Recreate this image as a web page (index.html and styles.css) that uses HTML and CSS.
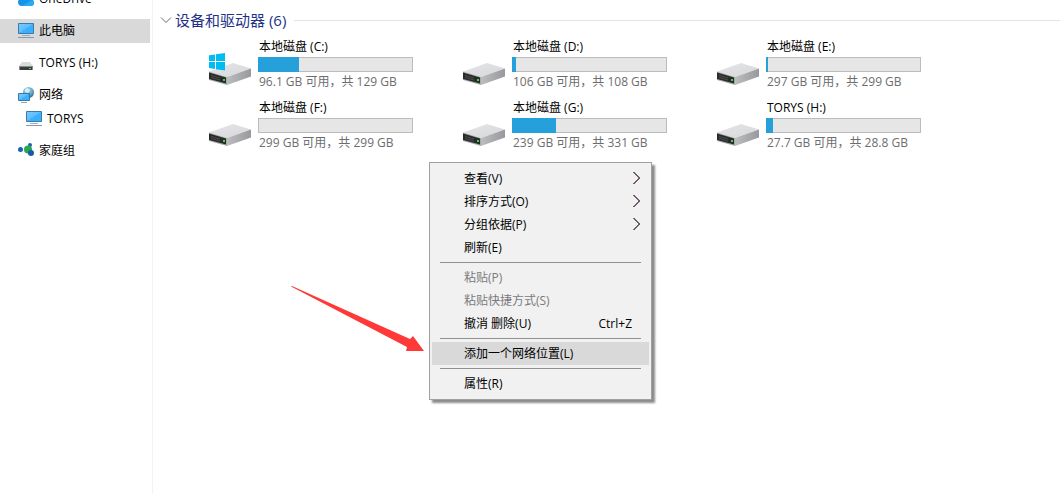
FILE: index.html
```html
<!DOCTYPE html>
<html lang="zh-CN">
<head>
<meta charset="utf-8">
<title>此电脑</title>
<link rel="stylesheet" href="styles.css">
</head>
<body>
<svg class="defs" aria-hidden="true">
  <defs>
    <linearGradient id="top" x1="0" y1="0" x2="1" y2="1"><stop offset="0" stop-color="#e6e6e8"/><stop offset="1" stop-color="#d6d7da"/></linearGradient>
    <linearGradient id="side" x1="0" y1="0" x2="1" y2="0"><stop offset="0" stop-color="#bcbdbf"/><stop offset="1" stop-color="#98999c"/></linearGradient>
    <linearGradient id="screen" x1="0" y1="0" x2="1" y2="1"><stop offset="0" stop-color="#7accff"/><stop offset=".5" stop-color="#5cbdff"/><stop offset=".5" stop-color="#3caeff"/><stop offset="1" stop-color="#36b2ff"/></linearGradient>
    <radialGradient id="globe" cx=".4" cy=".3" r=".8"><stop offset="0" stop-color="#c5e6f2"/><stop offset=".5" stop-color="#6fabc9"/><stop offset="1" stop-color="#286488"/></radialGradient>
    <symbol id="drive" viewBox="0 0 44 24">
      <path d="M1 9.500 25 1 43 6.500 19 15Z" fill="url(#top)"/>
      <path d="M19 15 43 6.500V14.500L19 23Z" fill="url(#side)"/>
      <path d="M1 9.500 19 15V23L1 18Z" fill="#a8a9ab"/>
      <path d="M1 10.500 18 15.500V21.500L1 17Z" fill="#292b2b"/>
      <path d="M3 13.500 12 16M3 15.500 12 18" stroke="#4c4f4d"/>
      <path d="M15 17h2v2h-2z" fill="#35dc35"/>
    </symbol>
    <symbol id="pc" viewBox="0 0 16 16">
      <path d="M0.500 0.500h15v10h-15z" fill="url(#screen)" stroke="#3c7ba5"/>
      <path d="M4 12.500h8" stroke="#9aaebf"/><path d="M0 14.500h16" stroke="#7e9ab7"/>
    </symbol>
    <symbol id="more" viewBox="0 0 9 14">
      <path d="M1 1 7 7 1 13" stroke="#e09a4a"/>
      <path d="M2 1 8 7 2 13" stroke="#6aa8ee"/>
      <path d="M1.500 1 7.500 7 1.500 13" stroke="#3a1c38"/>
    </symbol>
  </defs>
</svg>
<div class="window">
  <nav class="sidebar" aria-label="导航">
    <a class="node" href="#"><svg class="ico" viewBox="0 0 16 16"><path d="M4 15C1 15 0 13 0 11s2-4 4-4c1-3 8-3 9 1 2 0 3 2 3 4s-1 3-3 3Z" fill="#1593e8"/><path d="M4 15 14 9c2 1 3 5-1 6Z" fill="#2aaaf2"/></svg>OneDrive</a>
    <a class="node selected" href="#"><svg class="ico"><use href="#pc"/></svg>此电脑</a>
    <a class="node" href="#"><svg class="ico" viewBox="0 0 16 16"><path d="M4 7h8l3 4H1Z" fill="#d9dadb"/><path d="M1 11h14v4H1Z" fill="#3a3c3b"/><path d="M1 11.500h14M1.500 11v4M14.500 11v4" stroke="#8b8c8d"/><path d="M11 13h2v1h-2z" fill="#45e045"/></svg>TORYS (H:)</a>
    <a class="node" href="#"><svg class="ico" viewBox="0 0 16 16"><circle cx="10.500" cy="5.500" r="5.500" fill="url(#globe)"/><path d="M7 2q3-2 5 1l-2 3-3-1Z" fill="#d5edf5"/><path d="M.5 6.500h11v7H.5z" fill="url(#screen)" stroke="#3a789e"/><path d="M3 15.500h6" stroke="#8ea6ba"/></svg>网络</a>
    <a class="node child" href="#"><svg class="ico"><use href="#pc"/></svg>TORYS</a>
    <a class="node" href="#"><svg class="ico" viewBox="0 0 16 16"><circle cx="2.500" cy="6.500" r="2.500" fill="#1863b4"/><circle cx="12" cy="2" r="2" fill="#1863b4"/><circle cx="10" cy="6.500" r="4" fill="#2ba84e"/><circle cx="13" cy="10" r="3" fill="#165bac"/></svg>家庭组</a>
  </nav>
  <main class="content">
    <h1 class="group"><svg class="chev" viewBox="0 0 12 8"><path d="M1 1.500 6 6.500 11 1.500"/></svg>设备和驱动器 (6)</h1>
    <div class="drives">
      <article class="drive">
        <svg class="disk" viewBox="0 0 44 34"><use href="#drive" y="9" width="44" height="24"/><path d="M1 2.300 7 1.500V8H1ZM8 1.300 17 0V8H8ZM1 9h6v7L1 15ZM8 9h9v8.500L8 16.200Z" fill="#00bcf2"/></svg>
        <div class="info"><h2>本地磁盘 (C:)</h2><div class="bar"><div class="fill" style="width:26.4%"></div></div><p>96.1 GB 可用，共 129 GB</p></div>
      </article>
      <article class="drive">
        <svg class="disk" viewBox="0 0 44 34"><use href="#drive" y="9" width="44" height="24"/></svg>
        <div class="info"><h2>本地磁盘 (D:)</h2><div class="bar"><div class="fill" style="width:2.5%"></div></div><p>106 GB 可用，共 108 GB</p></div>
      </article>
      <article class="drive">
        <svg class="disk" viewBox="0 0 44 34"><use href="#drive" y="9" width="44" height="24"/></svg>
        <div class="info"><h2>本地磁盘 (E:)</h2><div class="bar"><div class="fill" style="width:1.2%"></div></div><p>297 GB 可用，共 299 GB</p></div>
      </article>
      <article class="drive">
        <svg class="disk" viewBox="0 0 44 34"><use href="#drive" y="9" width="44" height="24"/></svg>
        <div class="info"><h2>本地磁盘 (F:)</h2><div class="bar"></div><p>299 GB 可用，共 299 GB</p></div>
      </article>
      <article class="drive">
        <svg class="disk" viewBox="0 0 44 34"><use href="#drive" y="9" width="44" height="24"/></svg>
        <div class="info"><h2>本地磁盘 (G:)</h2><div class="bar"><div class="fill" style="width:28.3%"></div></div><p>239 GB 可用，共 331 GB</p></div>
      </article>
      <article class="drive">
        <svg class="disk" viewBox="0 0 44 34"><use href="#drive" y="9" width="44" height="24"/></svg>
        <div class="info"><h2>TORYS (H:)</h2><div class="bar"><div class="fill" style="width:4.5%"></div></div><p>27.7 GB 可用，共 28.8 GB</p></div>
      </article>
    </div>
  </main>
  <svg class="pointer" viewBox="0 0 134 68" aria-hidden="true"><path d="M0 0 1 0 119 53 122 50 133 65 115 65 116 61 1 1Z" fill="#ff3838"/></svg>
  <div class="menu" role="menu">
    <button class="item" role="menuitem">查看(V)<svg class="more"><use href="#more"/></svg></button>
    <button class="item" role="menuitem">排序方式(O)<svg class="more"><use href="#more"/></svg></button>
    <button class="item" role="menuitem">分组依据(P)<svg class="more"><use href="#more"/></svg></button>
    <button class="item" role="menuitem">刷新(E)</button>
    <hr>
    <button class="item" role="menuitem" disabled>粘贴(P)</button>
    <button class="item" role="menuitem" disabled>粘贴快捷方式(S)</button>
    <button class="item" role="menuitem">撤消 删除(U)<span class="key">Ctrl+Z</span></button>
    <hr>
    <button class="item active" role="menuitem">添加一个网络位置(L)</button>
    <hr>
    <button class="item" role="menuitem">属性(R)</button>
  </div>
</div>
</body>
</html>
```
FILE: styles.css
```css
* { box-sizing: border-box; }
body {
  margin: 0;
  background: #fff;
  color: #000;
  font: 12px/18px "Open Sans", "Noto Sans CJK SC", sans-serif;
}
.defs { position: absolute; width: 0; height: 0; }
.window {
  position: relative;
  display: flex;
  height: 100vh;
  overflow: hidden;
}
.sidebar {
  display: flex;
  flex-direction: column;
  flex: none;
  width: 153px;
  margin-top: -13px;
  padding-right: 2px;
  border-right: 1px solid #f3f3f3;
}
.node {
  display: flex;
  align-items: center;
  gap: 5px;
  flex: none;
  height: 24px;
  margin-bottom: 8px;
  padding-left: 18px;
  color: inherit;
  text-decoration: none;
}
.node:nth-child(4) { margin-bottom: 0; }
.child { padding-left: 26px; }
.selected { background: #d9d9d9; }
.ico { flex: none; width: 16px; height: 16px; }
.content { flex: 1; min-width: 0; padding: 8px 0 0 7px; }
.group {
  display: flex;
  align-items: center;
  gap: 3px;
  margin: 0;
  color: #1e3287;
  font-size: 15px;
  font-weight: 400;
  line-height: 24px;
}
.group::after {
  content: "";
  flex: 1;
  height: 1px;
  margin-left: 5px;
  background: #e2e2e2;
}
.chev { width: 12px; height: 8px; fill: none; stroke: #6b6b6b; }
.drives {
  display: grid;
  grid-template-columns: repeat(auto-fill, 254px);
  row-gap: 8px;
  margin-top: 6px;
  padding-left: 48px;
}
.drive { display: flex; gap: 6px; }
.disk { flex: none; width: 44px; height: 34px; margin-top: 15px; }
.info { width: 155px; }
.info h2, .info p {
  margin: 0;
  padding-left: 1px;
  font-size: 12px;
  font-weight: 400;
  white-space: nowrap;
}
.info h2 { margin-bottom: 1px; }
.info p { padding-top: 1px; color: #6d6d6d; }
.bar { height: 15px; background: #e6e6e6; box-shadow: inset 0 0 0 1px #bcbcbc; }
.fill { height: 15px; background: #26a0da; }
.pointer { position: absolute; left: 291px; top: 286px; width: 134px; height: 68px; }
.menu {
  position: absolute;
  left: 429px;
  top: 162px;
  width: 223px;
  padding: 4px 2px;
  background: #f1f1f1;
  border: 1px solid #a0a0a0;
  box-shadow: 3px 3px 2px #8c8c8c;
}
.menu hr {
  height: 1px;
  margin: 3px 8px;
  border: 0;
  background: #919191;
}
.item {
  display: flex;
  align-items: center;
  justify-content: space-between;
  width: 100%;
  height: 23px;
  padding: 0 8px 0 32px;
  border: 0;
  background: none;
  color: #000;
  font: inherit;
  text-align: left;
}
.item:disabled { color: #7a7a7a; }
.active { background: #d9d9d9; }
.more { width: 9px; height: 14px; margin-bottom: 2px; fill: none; }
.key { padding-right: 9px; }
```
